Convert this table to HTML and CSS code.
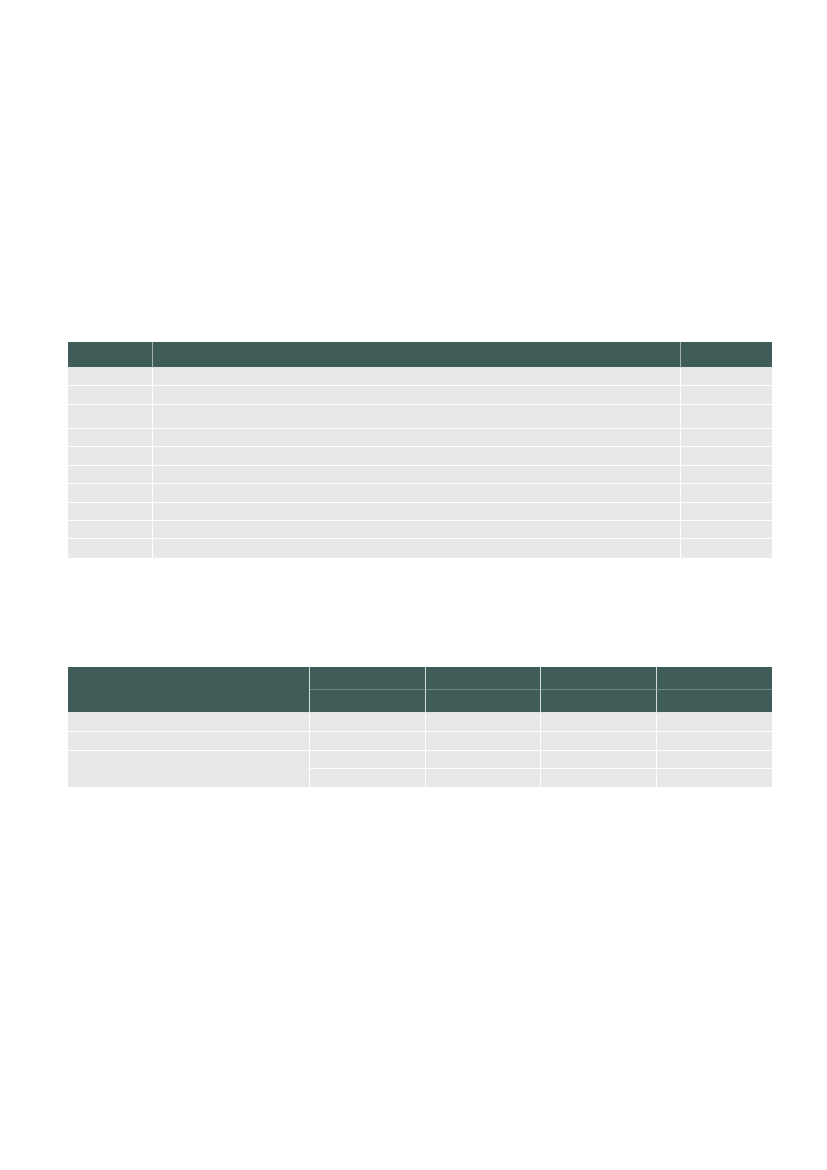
FILE: index.html
```html
<!DOCTYPE html>
<html lang="en">
<head>
<meta charset="utf-8">
<title>Tables</title>
<link rel="stylesheet" href="styles.css">
</head>
<body>
<main class="page">
  <section class="grid t1">
    <div class="h"></div><div class="h"></div><div class="h last"></div>
    <div class="c"></div><div class="c"></div><div class="c last"></div>
    <div class="c"></div><div class="c"></div><div class="c last"></div>
    <div class="c"></div><div class="c"></div><div class="c last"></div>
    <div class="c"></div><div class="c"></div><div class="c last"></div>
    <div class="c"></div><div class="c"></div><div class="c last"></div>
    <div class="c"></div><div class="c"></div><div class="c last"></div>
    <div class="c"></div><div class="c"></div><div class="c last"></div>
    <div class="c"></div><div class="c"></div><div class="c last"></div>
    <div class="c"></div><div class="c"></div><div class="c last"></div>
    <div class="c bottom"></div><div class="c bottom"></div><div class="c last bottom"></div>
  </section>

  <section class="grid t2">
    <div class="h span2"></div>
    <div class="h top"></div><div class="h top"></div><div class="h top"></div><div class="h top last"></div>
    <div class="h"></div><div class="h"></div><div class="h"></div><div class="h last"></div>
    <div class="c"></div><div class="c"></div><div class="c"></div><div class="c"></div><div class="c last"></div>
    <div class="c"></div><div class="c"></div><div class="c"></div><div class="c"></div><div class="c last"></div>
    <div class="c span2 bottom"></div>
    <div class="c"></div><div class="c"></div><div class="c"></div><div class="c last"></div>
    <div class="c bottom"></div><div class="c bottom"></div><div class="c bottom"></div><div class="c last bottom"></div>
  </section>
</main>
</body>
</html>
```

FILE: styles.css
```css
html, body {
  margin: 0;
  padding: 0;
  background: #ffffff;
  font-family: "Liberation Sans", Arial, sans-serif;
}

.page {
  width: 827px;
  height: 1170px;
  box-sizing: border-box;
  padding: 342px 55px 0 68px;
  display: flex;
  flex-direction: column;
  gap: 109px;
}

.grid {
  display: grid;
  width: 704px;
}

.t1 {
  grid-template-columns: 85px 528px 91px;
  grid-template-rows: 26px 18px 19px 24px 18px 19px 18px 19px 18px 18px 19px;
}

.t2 {
  grid-template-columns: 242px 116px 115px 116px 115px;
  grid-template-rows: 23px 23px 19px 19px 18px 18px;
}

.h, .c {
  box-sizing: border-box;
}

.h {
  background: #405c58;
  border-right: 1px solid #a3b0ad;
  border-bottom: 1px solid #e4e7e6;
}

.t2 .h {
  border-right-color: #d4dad9;
}

.t2 .h.top {
  border-bottom: 1px solid #6f8884;
}

.c {
  background: #e8e8e8;
  border-right: 1px solid #ffffff;
  border-bottom: 1px solid #ffffff;
}

.last {
  border-right: none;
}

.bottom {
  border-bottom: none;
}

.span2 {
  grid-row: span 2;
}
```
